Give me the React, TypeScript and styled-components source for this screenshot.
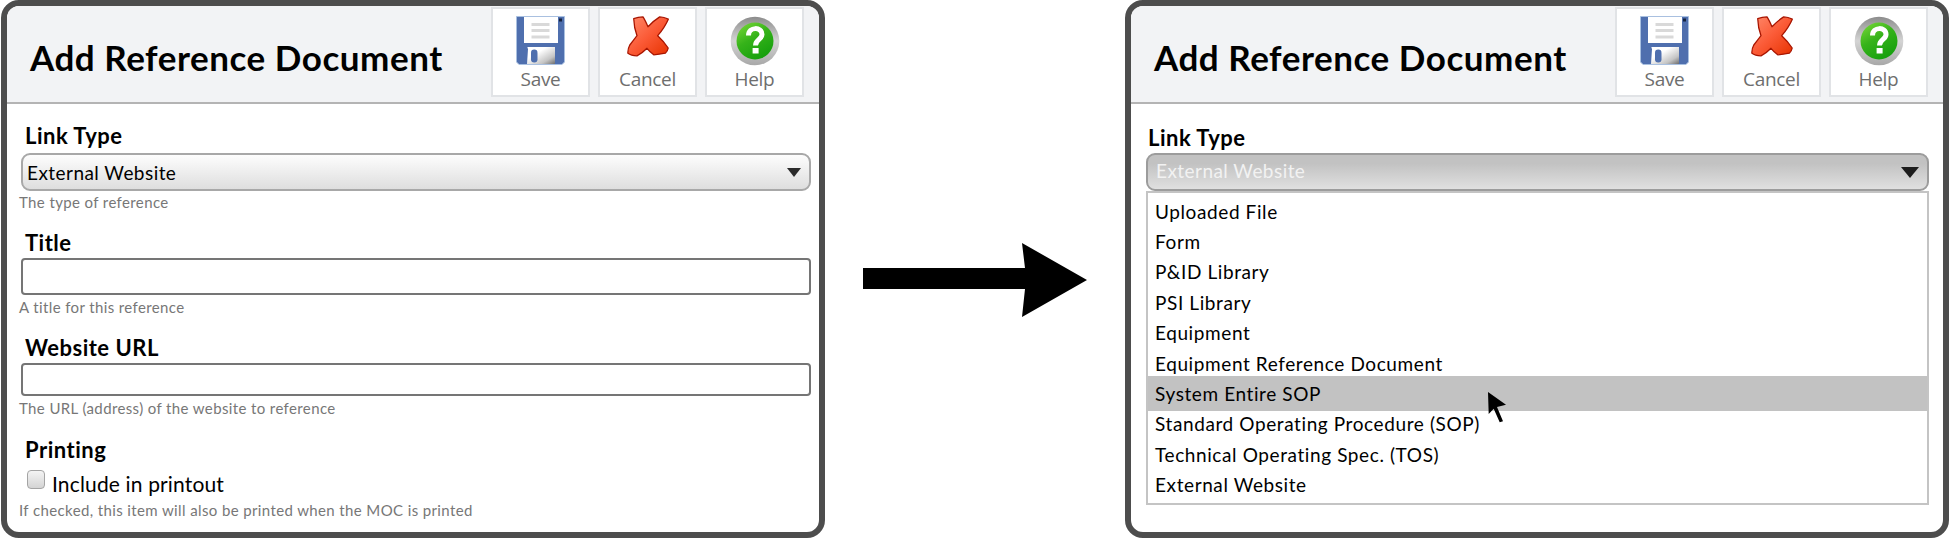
import styled, { createGlobalStyle } from 'styled-components';

const linkTypes = [
	'Uploaded File',
	'Form',
	'P&ID Library',
	'PSI Library',
	'Equipment',
	'Equipment Reference Document',
	'System Entire SOP',
	'Standard Operating Procedure (SOP)',
	'Technical Operating Spec. (TOS)',
	'External Website',
];

function SaveIcon() {
	return (
		<svg width="49" height="49" viewBox="0 0 49 49">
			<defs>
				<linearGradient id="shutter" x1="0" y1="0" x2="1" y2="1">
					<stop offset="0.35" stopColor="#ffffff" />
					<stop offset="0.75" stopColor="#c4c4c4" />
					<stop offset="1" stopColor="#6e6e6e" />
				</linearGradient>
			</defs>
			<path d="M0.5 0.5H48.5V46L46 48.5H3L0.5 46Z" fill="#4f6fae" stroke="#a9c0e0" strokeWidth="1" />
			<rect x="8" y="1" width="34" height="26" fill="#ffffff" />
			<rect x="15.5" y="7" width="18" height="3" fill="#d9d9d9" />
			<rect x="15.5" y="13" width="18" height="3" fill="#d9d9d9" />
			<rect x="15.5" y="19.5" width="18" height="3" fill="#d9d9d9" />
			<rect x="43" y="2.5" width="3" height="3" fill="#15233f" />
			<path d="M12 33C11 31 11 31 13 31H39V48H11Z" fill="url(#shutter)" />
			<rect x="15" y="33.5" width="6.5" height="13" rx="3.2" fill="#4f6fae" />
		</svg>
	);
}

function CancelIcon() {
	return (
		<svg width="42" height="41" viewBox="0 0 42 41">
			<defs>
				<linearGradient id="cross" x1="0" y1="0" x2="1" y2="1">
					<stop offset="0" stopColor="#ff8a6c" />
					<stop offset="0.5" stopColor="#fb5a36" />
					<stop offset="1" stopColor="#e63200" />
				</linearGradient>
			</defs>
			<path
				d="M6.7 2.6Q11 1.2 16 0.9Q18 4 21 10.7Q27 4.5 32.7 0.9Q37 1 41.3 3.2Q38 11 30.7 19.7Q36 24.5 41.2 32Q40.6 35.5 38.3 37.2Q32 38.6 26.7 38.8Q23 36 20 32.3Q15 37.5 10 39.8Q4 39.6 0.9 37.2Q0.6 33 2.8 29Q6 25 10 19.7Q7 12 6.7 2.6Z"
				fill="url(#cross)"
				stroke="#a81500"
				strokeWidth="1.3"
				strokeLinejoin="round"
			/>
		</svg>
	);
}

function HelpIcon() {
	return (
		<svg width="50" height="50" viewBox="0 0 50 50">
			<defs>
				<linearGradient id="ring" x1="0" y1="0" x2="0" y2="1">
					<stop offset="0" stopColor="#8c8c8c" />
					<stop offset="0.5" stopColor="#d4d4d4" />
					<stop offset="1" stopColor="#a8a8a8" />
				</linearGradient>
				<linearGradient id="ball" x1="0" y1="0" x2="0.6" y2="1">
					<stop offset="0" stopColor="#7edb3a" />
					<stop offset="0.5" stopColor="#36b31a" />
					<stop offset="1" stopColor="#17a00e" />
				</linearGradient>
			</defs>
			<circle cx="25" cy="25" r="24.3" fill="url(#ring)" />
			<circle cx="25" cy="25" r="18.5" fill="url(#ball)" />
			<path d="M18.5 19.5C18.5 10.5 32 10.5 32 18.5C32 23.5 25.5 23.5 25.5 29.5" fill="none" stroke="#fff" strokeWidth="5" />
			<rect x="22.6" y="32" width="6" height="5.5" fill="#fff" />
		</svg>
	);
}

function Cursor() {
	return (
		<svg width="19" height="31" viewBox="0 0 19 31">
			<path d="M0 0L18 12.7L9 15L15 29.3L11.7 30.3L5.7 16.7L0.7 22Z" fill="#000" />
		</svg>
	);
}

function BigArrow() {
	return (
		<svg width="224" height="74" viewBox="0 0 224 74">
			<path d="M0 25H162L159 0L224 37L159 74L162 46H0Z" fill="#000" />
		</svg>
	);
}

function Header() {
	return (
		<HeaderBar>
			<Heading>Add Reference Document</Heading>
			<Toolbar>
				<ToolButton>
					<IconSlot>
						<SaveIcon />
					</IconSlot>
					Save
				</ToolButton>
				<ToolButton>
					<IconSlot>
						<CancelIcon />
					</IconSlot>
					Cancel
				</ToolButton>
				<ToolButton>
					<IconSlot>
						<HelpIcon />
					</IconSlot>
					Help
				</ToolButton>
			</Toolbar>
		</HeaderBar>
	);
}

function App() {
	return (
		<>
			<GlobalStyle />
			<Page>
				<Panel>
					<Header />
					<Body>
						<Field>
							<Label>Link Type</Label>
							<SelectBox>
								External Website
								<Caret />
							</SelectBox>
							<Hint>The type of reference</Hint>
						</Field>
						<Field>
							<Label>Title</Label>
							<TextInput $height={37} type="text" />
							<Hint>A title for this reference</Hint>
						</Field>
						<Field>
							<Label>Website URL</Label>
							<TextInput $height={33} type="text" />
							<Hint>The URL (address) of the website to reference</Hint>
						</Field>
						<PrintField>
							<Label>Printing</Label>
							<CheckRow>
								<CheckBox type="checkbox" />
								Include in printout
							</CheckRow>
							<Hint>If checked, this item will also be printed when the MOC is printed</Hint>
						</PrintField>
					</Body>
				</Panel>
				<ArrowCell>
					<BigArrow />
				</ArrowCell>
				<Panel>
					<Header />
					<OpenBody>
						<OpenLabel>Link Type</OpenLabel>
						<OpenSelect>
							<OpenValue>External Website</OpenValue>
							<OpenCaret />
						</OpenSelect>
						<OptionList>
							{linkTypes.map((type) => (
								<OptionItem key={type} $active={type === 'System Entire SOP'}>
									{type}
									{type === 'System Entire SOP' && (
										<CursorSpot>
											<Cursor />
										</CursorSpot>
									)}
								</OptionItem>
							))}
						</OptionList>
					</OpenBody>
				</Panel>
			</Page>
		</>
	);
}

const GlobalStyle = createGlobalStyle`
	html, body {
		margin: 0;
		background: #fff;
	}
	body {
		font-family: 'Lato', 'Liberation Sans', sans-serif;
		color: #000;
	}
	* {
		box-sizing: border-box;
	}
`;

const Page = styled.div`
	width: 1950px;
	height: 538px;
	padding: 0 1px;
	display: grid;
	grid-template-columns: 824px 1fr 824px;
	overflow: hidden;
`;

const Panel = styled.section`
	height: 538px;
	border: 6px solid #4d4d4d;
	border-radius: 18px;
	background: #fff;
	overflow: hidden;
`;

const ArrowCell = styled.div`
	display: flex;
	align-items: center;
	justify-content: center;
	padding-top: 22px;
`;

const HeaderBar = styled.header`
	height: 98px;
	display: flex;
	align-items: center;
	justify-content: space-between;
	padding: 0 15px 0 23px;
	background: #f2f3f5;
	border-bottom: 2px solid #b4b4b4;
`;

const Heading = styled.h1`
	margin: 0;
	font-size: 35px;
	line-height: 40px;
	font-weight: 700;
	letter-spacing: 0.53px;
	margin-top: 5px;
`;

const Toolbar = styled.div`
	display: flex;
	gap: 8px;
	padding-bottom: 4px;
`;

const ToolButton = styled.div`
	width: 99px;
	height: 90px;
	border: 2px solid #e1e3e6;
	background: #fff;
	display: flex;
	flex-direction: column;
	align-items: center;
	font-family: 'Open Sans', sans-serif;
	font-size: 19px;
	line-height: 26px;
	letter-spacing: -0.3px;
	color: #6e6e6e;
`;

const IconSlot = styled.div`
	height: 57px;
	padding-top: 7px;
	display: flex;
	align-items: flex-start;
	justify-content: center;
`;

const Body = styled.div`
	padding: 20px 8px 0 14px;
	display: flex;
	flex-direction: column;
	gap: 20px;
`;

const Field = styled.div`
	display: flex;
	flex-direction: column;
`;

const PrintField = styled(Field)`
	margin-top: 1px;
`;

const Label = styled.label`
	font-size: 22px;
	line-height: 24px;
	font-weight: 700;
	padding-left: 4px;
	margin-bottom: 3px;
	letter-spacing: 0.5px;
`;

const SelectBox = styled.div`
	height: 38px;
	margin: 2px 0 -1px;
	padding: 0 8px 0 4px;
	display: flex;
	align-items: center;
	justify-content: space-between;
	border: 2px solid #a8a8a8;
	border-radius: 9px;
	background: linear-gradient(#fdfdfd, #dedede);
	font-size: 19px;
	letter-spacing: 0.45px;
`;

const Caret = styled.span`
	width: 0;
	height: 0;
	border-left: 7px solid transparent;
	border-right: 7px solid transparent;
	border-top: 9px solid #2b2b2b;
`;

const TextInput = styled.input<{ $height: number }>`
	height: ${(p) => p.$height}px;
	border: 2px solid #757575;
	border-radius: 4px;
	background: #fff;
	outline: none;
`;

const Hint = styled.div`
	font-size: 15px;
	line-height: 18px;
	color: #777;
	margin: 3px 0 0 -2px;
	letter-spacing: 0.38px;
`;

const CheckRow = styled.div`
	display: flex;
	align-items: center;
	gap: 7px;
	height: 26px;
	padding-left: 6px;
	margin: 5px 0 2px;
	font-size: 21px;
	letter-spacing: 0.15px;
`;

const CheckBox = styled.input`
	appearance: none;
	width: 18px;
	height: 19px;
	margin: -8px 0 0 0;
	border: 1.5px solid #a4a4a4;
	border-radius: 4px;
	background: linear-gradient(#f4f4f4, #d4d4d4);
`;

const OpenBody = styled.div`
	padding: 20px 14px 0 15px;
	display: flex;
	flex-direction: column;
`;

const OpenLabel = styled.label`
	font-size: 22px;
	line-height: 24px;
	font-weight: 700;
	padding-left: 2px;
	margin: 2px 0 3px;
	letter-spacing: 0.5px;
`;

const OpenSelect = styled.div`
	height: 38px;
	padding: 0 8px;
	display: flex;
	align-items: center;
	justify-content: space-between;
	border: 2px solid #9c9c9c;
	border-radius: 9px;
	background: linear-gradient(#c2c2c2 25%, #e0e0e0);
	color: #f2f2f2;
	font-size: 19px;
	letter-spacing: 0.45px;
`;

const OpenValue = styled.span`
	margin-top: -4px;
`;

const OpenCaret = styled.span`
	width: 0;
	height: 0;
	border-left: 9px solid transparent;
	border-right: 9px solid transparent;
	border-top: 11px solid #1c1c1c;
`;

const OptionList = styled.ul`
	list-style: none;
	margin: 0;
	height: 314px;
	padding: 3px 0 0;
	border: 2px solid #c4c4c4;
	background: #fff;
`;

const OptionItem = styled.li<{ $active?: boolean }>`
	position: relative;
	height: ${(p) => (p.$active ? '34.4px' : '30.4px')};
	margin: ${(p) => (p.$active ? '-2px 0' : '0')};
	padding-left: 7px;
	display: flex;
	align-items: center;
	font-size: 19px;
	letter-spacing: 0.6px;
	background: ${(p) => (p.$active ? '#c2c2c2' : 'transparent')};
`;

const CursorSpot = styled.span`
	position: absolute;
	left: 340px;
	top: 16px;
	z-index: 2;
	line-height: 0;
`;

export default App;
